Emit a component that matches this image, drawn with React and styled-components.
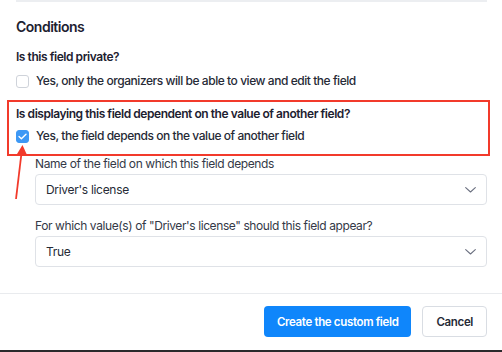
import React from 'react'
import styled, { createGlobalStyle } from 'styled-components'

const GlobalStyle = createGlobalStyle`
  html, body {
    margin: 0;
    padding: 0;
    background: #ffffff;
  }
  body {
    font-family: Inter, "Noto Sans", "Liberation Sans", sans-serif;
    color: #262a36;
    -webkit-font-smoothing: antialiased;
  }
`

function Checkbox({ checked }) {
    return (
        <Box checked={checked}>
            {checked && (
                <svg width="9" height="7" viewBox="0 0 9 7">
                    <path d="M1 3.6 L3.4 5.8 L8 1.2" fill="none" stroke="#fff" strokeWidth="1.4" strokeLinecap="round" strokeLinejoin="round" />
                </svg>
            )}
        </Box>
    )
}

function Select({ value }) {
    return (
        <SelectBox>
            <span>{value}</span>
            <svg width="11" height="6" viewBox="0 0 11 6">
                <path d="M0.7 0.7 L5.5 5 L10.3 0.7" fill="none" stroke="#6b7080" strokeWidth="1.1" strokeLinecap="round" strokeLinejoin="round" />
            </svg>
        </SelectBox>
    )
}

function App() {
    return (
        <>
            <GlobalStyle />
            <Page>
                <Content>
                    <TopRule />
                    <Title>Conditions</Title>
                    <Question>Is this field private?</Question>
                    <Option>
                        <Checkbox />
                        <span>Yes, only the organizers will be able to view and edit the field</span>
                    </Option>
                    <Highlight>
                        <Question>Is displaying this field dependent on the value of another field?</Question>
                        <Option>
                            <Checkbox checked />
                            <span>Yes, the field depends on the value of another field</span>
                        </Option>
                    </Highlight>
                    <Nested>
                        <Label>Name of the field on which this field depends</Label>
                        <Select value="Driver's license" />
                        <Label>For which value(s) of "Driver's license" should this field appear?</Label>
                        <Select value="True" />
                    </Nested>
                </Content>
                <Footer>
                    <PrimaryBtn>Create the custom field</PrimaryBtn>
                    <SecondaryBtn>Cancel</SecondaryBtn>
                </Footer>
                <BottomEdge />
                <Arrow width="20" height="60" viewBox="0 0 20 60">
                    <line x1="4" y1="57" x2="9.5" y2="11" stroke="#f23a2b" strokeWidth="1.8" />
                    <polygon points="10.5,3 15,13 5,12" fill="#f23a2b" />
                </Arrow>
            </Page>
        </>
    )
}

export default App

const Page = styled.div`
    position: relative;
    width: 502px;
    height: 352px;
    overflow: hidden;
    background: #ffffff;
`

const Content = styled.div`
    padding: 0 15px 0 16px;
`

const TopRule = styled.div`
    height: 2px;
    background: #eceef1;
`

const Title = styled.h2`
    margin: 16px 0 0;
    font-size: 14px;
    font-weight: 600;
    line-height: 18px;
    letter-spacing: -0.5px;
    color: #1d2130;
`

const Question = styled.div`
    margin-top: 13px;
    font-size: 12px;
    font-weight: 600;
    line-height: 16px;
    color: #1d2130;
    letter-spacing: -0.45px;
`

const Option = styled.label`
    display: flex;
    align-items: center;
    gap: 7px;
    margin-top: 8px;
    font-size: 12px;
    line-height: 16px;
    font-weight: 500;
    color: #262a36;
    letter-spacing: -0.45px;
`

const Box = styled.span`
    flex: none;
    width: 13px;
    height: 13px;
    box-sizing: border-box;
    border-radius: 3px;
    border: 1px solid ${props => (props.checked ? '#3d98f5' : '#cfd3da')};
    background: ${props => (props.checked ? '#3d98f5' : '#ffffff')};
    display: flex;
    align-items: center;
    justify-content: center;
`

const Highlight = styled.div`
    margin: 11px -3px 0 -9px;
    padding: 4px 7px 10px;
    border: 2px solid #f23a2b;

    ${Question} {
        margin-top: 0;
    }
    ${Option} {
        margin-top: 6px;
    }
`

const Nested = styled.div`
    padding-left: 19px;
`

const Label = styled.div`
    font-size: 12px;
    line-height: 16px;
    color: #343947;
    letter-spacing: -0.4px;
`

const SelectBox = styled.div`
    box-sizing: border-box;
    height: 31px;
    margin-top: 2px;
    display: flex;
    align-items: center;
    justify-content: space-between;
    padding: 0 10px 0 10px;
    border: 1px solid #dfe2e7;
    border-radius: 4px;
    font-size: 12px;
    letter-spacing: -0.3px;
    color: #262a36;
    background: #ffffff;

    & + ${Label} {
        margin-top: 13px;
    }
`

const Footer = styled.div`
    margin-top: 26px;
    border-top: 1px solid #e9ebee;
    padding: 12px 15px 0 16px;
    display: flex;
    justify-content: flex-end;
    gap: 11px;
`

const PrimaryBtn = styled.button`
    height: 31px;
    padding: 0 13px;
    border: none;
    border-radius: 4px;
    background: #0f86fb;
    color: #ffffff;
    font-family: inherit;
    font-size: 11.5px;
    font-weight: 600;
    letter-spacing: -0.35px;
`

const SecondaryBtn = styled(PrimaryBtn)`
    background: #ffffff;
    color: #262a36;
    border: 1px solid #d9dde3;
    padding: 0 13px;
`

const BottomEdge = styled.div`
    position: absolute;
    left: 0;
    right: 0;
    bottom: 0;
    height: 2px;
    background: #2a2a2c;
`

const Arrow = styled.svg`
    position: absolute;
    left: 12px;
    top: 142px;
`
